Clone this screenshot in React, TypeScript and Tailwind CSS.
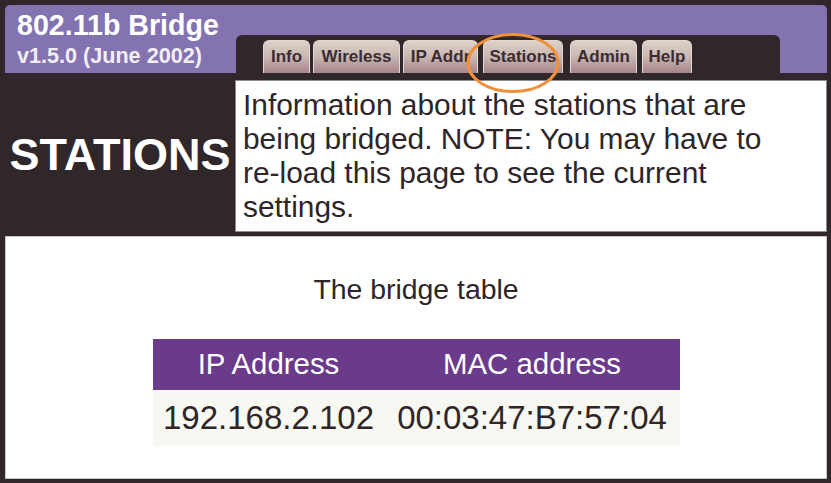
import React from "react";

const tabs = [
  { label: "Info", cls: "w-[47px] ml-[27px]" },
  { label: "Wireless", cls: "w-[87px] ml-[3px]" },
  { label: "IP Addr", cls: "w-[75px] ml-[3px]" },
  { label: "Stations", cls: "w-[80px] ml-[5px]" },
  { label: "Admin", cls: "w-[67px] ml-[7px]" },
  { label: "Help", cls: "w-[50px] ml-[5px]" },
];

export default function App() {
  return (
    <div
      className="relative w-[831px] h-[483px] overflow-hidden bg-[#2f272a] pl-[5px] pr-[4px] pt-[5px]"
      style={{ fontFamily: '"Liberation Sans", Arial, sans-serif' }}
    >
      {/* Header */}
      <div className="flex h-[68px]">
        <div className="w-[231px] bg-[#8373b1] rounded-tl-[5px] pl-[12px] pt-[4px] text-white font-bold">
          <div className="text-[28.6px] leading-[32px]">802.11b Bridge</div>
          <div className="text-[21.6px] leading-[24px] mt-[3px] text-[#f3eef6]">v1.5.0 (June 2002)</div>
        </div>
        <div className="w-[544px] bg-[#8373b1] flex flex-col">
          <div className="h-[30px]" />
          <div className="flex-1 bg-[#2f272a] rounded-t-[6px] flex items-end">
            {tabs.map((t) => (
              <div
                key={t.label}
                className={`${t.cls} h-[33px] rounded-t-[6px] bg-linear-to-b from-[#ddd2ca] via-[#c9b7b2] to-[#a4858a] border-t border-l border-r border-[#e4d9d2] flex items-center justify-center text-[17px] font-bold text-[#3a2c32] whitespace-nowrap overflow-hidden`}
              >
                {t.label}
              </div>
            ))}
          </div>
        </div>
        <div className="flex-1 bg-[#8373b1] rounded-tr-[5px]" />
      </div>

      {/* Title row */}
      <div className="flex h-[163px]">
        <div className="w-[230px] flex items-center justify-center text-white font-bold text-[45px] leading-none">
          STATIONS
        </div>
        <div className="flex-1 pt-[7px] pb-[4px]">
          <div className="h-full bg-white border border-[#8f888a] pl-[7px] pt-[7px] text-[29.9px] leading-[34px] text-[#2e2528]">
            Information about the stations that are
            <br />
            being bridged. NOTE: You may have to
            <br />
            re-load this page to see the current
            <br />
            settings.
          </div>
        </div>
      </div>

      {/* Main panel */}
      <div className="h-[243px] bg-white border border-[#c9c5c6] flex flex-col items-center">
        <div className="mt-[36px] text-[28.4px] leading-[32px] text-[#2e2528]">The bridge table</div>
        <table className="mt-[34px] border-collapse">
          <thead>
            <tr className="bg-[#6a3b8b] text-white h-[51px]">
              <th className="w-[232px] font-normal text-[29.4px] text-center p-0">IP Address</th>
              <th className="w-[295px] font-normal text-[29.4px] text-center p-0">MAC address</th>
            </tr>
          </thead>
          <tbody>
            <tr className="bg-[#f7f8f1] h-[56px] text-[#2e2528]">
              <td className="text-[33px] text-center p-0">192.168.2.102</td>
              <td className="text-[33px] text-center p-0">00:03:47:B7:57:04</td>
            </tr>
          </tbody>
        </table>
      </div>

      {/* Orange highlight ellipse */}
      <svg
        className="absolute left-[464px] top-[31px] w-[98px] h-[64px] pointer-events-none"
        viewBox="0 0 98 64"
      >
        <ellipse cx="49" cy="32" rx="45" ry="28.5" fill="none" stroke="#f0903a" strokeWidth="3" />
      </svg>
    </div>
  );
}
